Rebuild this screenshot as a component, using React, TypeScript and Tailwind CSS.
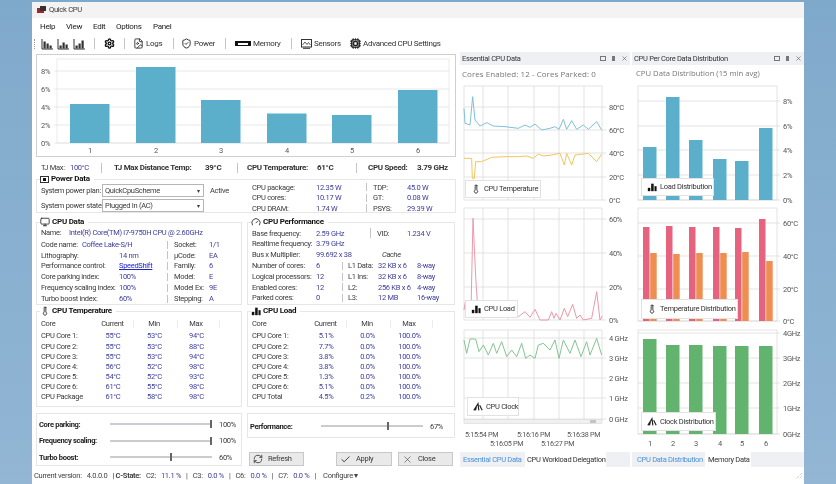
import React from "react";
import { Monitor, Thermometer, Settings, Cpu, RefreshCw, Check, X, Gauge, FileImage, ShieldCheck } from "lucide-react";

const V = "text-[#3d3d9e]";

function Bars({ size = 11 }: { size?: number }) {
  return (
    <svg width={size} height={size} viewBox="0 0 12 12" className="shrink-0">
      <rect x="1" y="7" width="3" height="4" fill="#111" />
      <rect x="5" y="2" width="3" height="9" fill="#111" />
      <rect x="9" y="5" width="2.5" height="6" fill="#111" />
    </svg>
  );
}

function ToolChart({ h }: { h: number[] }) {
  return (
    <svg width="12" height="12" viewBox="0 0 12 12" className="shrink-0">
      <path d="M1 1 V11 H12" stroke="#333" strokeWidth="1" fill="none" />
      {h.map((v, i) => (
        <rect key={i} x={2.5 + i * 3} y={10.5 - v} width="2.2" height={v} fill="#333" />
      ))}
    </svg>
  );
}

function SensorIcon() {
  return (
    <svg width="11" height="10" viewBox="0 0 11 10" className="shrink-0">
      <rect x="0.5" y="0.5" width="10" height="7.5" fill="none" stroke="#333" strokeWidth="1" />
      <path d="M1.5 6 L4 3 L6 5.5 L7.5 3.5 L9.5 6" fill="none" stroke="#333" strokeWidth="0.8" />
      <rect x="2" y="8.8" width="7" height="1" fill="#333" />
    </svg>
  );
}

function Clock2() {
  return (
    <svg width="10" height="10" viewBox="0 0 12 12" className="shrink-0">
      <path d="M1 10 L6 2 L7 10 M8 4 L11 10 M4 6 L3 10" stroke="#222" strokeWidth="1.4" fill="none" />
    </svg>
  );
}

function Div({ w, h = 8 }: { w: number; h?: number }) {
  return (
    <span className="flex shrink-0 justify-center" style={{ width: w }}>
      <span className="w-px bg-[#c4c4c4]" style={{ height: h }} />
    </span>
  );
}

function Group({ title, icon, className = "", children }: { title: string; icon: React.ReactNode; className?: string; children: React.ReactNode }) {
  return (
    <div className={"border border-[#e6e6e6] " + className}>
      <div className="-mt-[7px] ml-[3px] flex h-[12px] w-fit items-center gap-[2px] whitespace-nowrap bg-white pr-1 text-[8px] font-bold tracking-[-0.25px] text-[#111]">
        {icon}
        {title}
      </div>
      {children}
    </div>
  );
}

function Cell({ w, v, children }: { w: number; v?: boolean; children: React.ReactNode }) {
  return (
    <span className={"shrink-0 whitespace-nowrap " + (v ? V : "")} style={{ width: w }}>
      {children}
    </span>
  );
}

function DataRows() {
  const rows: [string, string, string, string][] = [
    ["Lithography:", "14 nm", "µCode:", "EA"],
    ["Performance control:", "SpeedShift", "Family:", "6"],
    ["Core parking index:", "100%", "Model:", "E"],
    ["Frequency scaling index:", "100%", "Model Ex:", "9E"],
    ["Turbo boost index:", "60%", "Stepping:", "A"],
  ];
  return (
    <div className="-mt-[1px] flex flex-col pl-[4px]">
      <div className="flex h-[12px] items-center">
        <Cell w={28}>Name:</Cell>
        <Cell w={170} v>Intel(R) Core(TM) i7-9750H CPU @ 2.60GHz</Cell>
      </div>
      <div className="flex h-[11px] items-center">
        <Cell w={41}>Code name:</Cell>
        <Cell w={78} v>Coffee Lake-S/H</Cell>
        <Div w={14} />
        <Cell w={35}>Socket:</Cell>
        <Cell w={20} v>1/1</Cell>
      </div>
      {rows.map((r) => (
        <div key={r[0]} className="flex h-[10.8px] items-center">
          <Cell w={78}>{r[0]}</Cell>
          <Cell w={41} v>
            {r[1] === "SpeedShift" ? <span className="underline text-[#2222cc]">{r[1]}</span> : r[1]}
          </Cell>
          <Div w={14} />
          <Cell w={35}>{r[2]}</Cell>
          <Cell w={20} v>{r[3]}</Cell>
        </div>
      ))}
    </div>
  );
}

function PerfRows() {
  const rows: string[][] = [
    ["Number of cores:", "6", "L1 Data:", "32 KB x 6", "8-way"],
    ["Logical processors:", "12", "L1 Ins:", "32 KB x 6", "8-way"],
    ["Enabled cores:", "12", "L2:", "256 KB x 6", "4-way"],
    ["Parked cores:", "0", "L3:", "12 MB", "16-way"],
  ];
  return (
    <div className="flex flex-col pl-[4px]">
      <div className="flex h-[10.8px] items-center">
        <Cell w={64}>Base frequency:</Cell>
        <Cell w={47} v>2.59 GHz</Cell>
        <Div w={14} h={10} />
        <Cell w={30}>VID:</Cell>
        <Cell w={40} v>1.234 V</Cell>
      </div>
      <div className="flex h-[10.8px] items-center">
        <Cell w={64}>Realtime frequency:</Cell>
        <Cell w={47} v>3.79 GHz</Cell>
      </div>
      <div className="flex h-[10.8px] items-center">
        <Cell w={64}>Bus x Multiplier:</Cell>
        <Cell w={66} v>99.692 x 38</Cell>
        <span className="italic">Cache</span>
      </div>
      {rows.map((r) => (
        <div key={r[0]} className="flex h-[10.8px] items-center">
          <Cell w={64}>{r[0]}</Cell>
          <Cell w={21} v>{r[1]}</Cell>
          <Div w={11} />
          <Cell w={30}>{r[2]}</Cell>
          <Cell w={39} v>{r[3]}</Cell>
          <Cell w={30} v>{r[4]}</Cell>
        </div>
      ))}
    </div>
  );
}

function CoreTable({ rows, coreW = 51 }: { rows: string[][]; coreW?: number }) {
  return (
    <div className="pl-[4px]">
      <div className="flex h-[14px] items-center">
        <span style={{ width: coreW }}>Core</span>
        <span className="w-[42px] border-r border-[#ececec] text-center">Current</span>
        <span className="w-[44px] border-r border-[#ececec] pr-[3px] text-center">Min</span>
        <span className="w-[42px] border-r border-[#ececec] pr-[5px] text-center">Max</span>
      </div>
      {rows.map((r) => (
        <div key={r[0]} className="flex h-[10.2px] items-center">
          <span className="whitespace-nowrap" style={{ width: coreW }}>{r[0]}</span>
          <span className={"w-[42px] text-center " + V}>{r[1]}</span>
          <span className={"w-[44px] pr-[3px] text-center " + V}>{r[2]}</span>
          <span className={"w-[42px] pr-[5px] text-center " + V}>{r[3]}</span>
        </div>
      ))}
    </div>
  );
}

function Slider({ label, pos, value, trackW = 102, labelW = 71 }: { label: string; pos: number; value: string; trackW?: number; labelW?: number }) {
  return (
    <div className="flex h-[16.5px] items-center pl-[2px]">
      <span className="shrink-0 whitespace-nowrap font-bold text-[#222]" style={{ width: labelW }}>{label}</span>
      <span className="relative h-[2px] shrink-0 bg-[#c9ccd0]" style={{ width: trackW }}>
        <span className="absolute -top-[3px] h-[8px] w-[2px] bg-[#666]" style={{ left: pos }} />
      </span>
      <span className="ml-[7px]">{value}</span>
    </div>
  );
}

function Btn({ icon, label, w }: { icon: React.ReactNode; label: string; w: number }) {
  return (
    <div className="flex h-[14px] items-center gap-[5px] border border-[#c8c8c8] bg-[#e9e9e9] pl-[3px]" style={{ width: w }}>
      {icon}
      <span>{label}</span>
    </div>
  );
}

const z = (a: number[][], ox: number, oy: number) => a.map(([x, y]) => `${ox + x / 3},${oy + y / 3}`).join(" ");

const tempBlue = [[27,175],[30,220],[45,225],[53,140],[60,210],[75,228],[95,218],[115,228],[150,230],[190,235],[210,225],[225,232],[240,222],[260,240],[285,235],[300,230],[312,238],[325,208],[335,238],[350,212],[365,238],[385,225],[400,238],[425,215],[440,240]];
const tempYellow = [[27,325],[50,325],[52,385],[58,385],[62,335],[80,335],[110,322],[150,320],[190,320],[215,318],[235,325],[250,312],[265,318],[290,315],[315,310],[328,345],[335,310],[350,345],[360,315],[385,312],[400,310],[425,335],[440,312]];
const loadLine = [[27,300],[32,270],[40,310],[48,300],[54,25],[62,200],[70,320],[190,320],[210,305],[225,322],[240,298],[255,330],[280,330],[290,305],[297,325],[303,310],[315,330],[328,295],[338,320],[353,283],[365,325],[375,315],[385,330],[410,325],[425,245],[435,330],[442,318]];
const clockLine = [[27,45],[35,85],[45,42],[62,42],[72,80],[85,60],[100,90],[115,55],[125,85],[140,50],[155,95],[170,75],[185,95],[200,55],[212,100],[225,90],[240,100],[250,60],[265,55],[285,75],[300,45],[312,100],[325,45],[345,85],[360,45],[378,95],[395,50],[405,90],[425,40],[440,90]];

const VX = [464, 483, 508, 534, 559, 584, 602];
const G = "#dcdcdc";

function MidChart({ y0, h, top, bottom, ticks, children }: { y0: number; h: number; top: number; bottom: number; ticks: [number, string][]; children: React.ReactNode }) {
  return (
    <svg width="170" height={h} viewBox={`460 ${y0} 170 ${h}`} className="block">
      {VX.map((x) => <line key={x} x1={x} x2={x} y1={top} y2={bottom} stroke={G} strokeWidth="0.8" />)}
      <line x1="464" x2="602" y1={top} y2={top} stroke={G} strokeWidth="0.8" />
      {ticks.map(([y, t]) => (
        <g key={t}>
          <line x1="464" x2="606" y1={y} y2={y} stroke={G} strokeWidth="0.8" />
          <text x="609" y={y + 3} fontSize="7.5" fill="#555">{t}</text>
        </g>
      ))}
      {children}
    </svg>
  );
}

function RightChart({ y0, h, top, bottom, ticks, children }: { y0: number; h: number; top: number; bottom: number; ticks: [number, string][]; children: React.ReactNode }) {
  return (
    <svg width="172" height={h} viewBox={`632 ${y0} 172 ${h}`} className="block">
      <rect x="638" y={top} width="139" height={bottom - top} fill="none" stroke={G} strokeWidth="0.8" />
      {ticks.map(([y, t]) => (
        <g key={t}>
          <line x1="638" x2="780" y1={y} y2={y} stroke={G} strokeWidth="0.8" />
          <text x="783" y={y + 3} fontSize="7.5" fill="#555">{t}</text>
        </g>
      ))}
      {children}
    </svg>
  );
}

function Legend({ pos, icon, label }: { pos: string; icon: React.ReactNode; label: string }) {
  return (
    <div className={"absolute flex items-center gap-[3px] whitespace-nowrap border border-[#e2e2e2] bg-white pl-[5px] text-[#333] " + pos}>
      {icon}
      <span>{label}</span>
    </div>
  );
}

function PaneHeader({ title }: { title: string }) {
  return (
    <div className="flex h-[13px] items-center justify-between bg-[#eff0f3] pl-[2px] pr-[2px] text-[#333]">
      <span className="whitespace-nowrap">{title}</span>
      <span className="flex items-center gap-[6px] text-[#555]">
        <span className="h-[5px] w-[6px] border border-[#777]" />
        <span className="h-[5px] w-[3px] bg-[#777]" />
        <X size={7} strokeWidth={2} />
      </span>
    </div>
  );
}

const RB = [643, 666, 689, 713, 735, 759];
const TopBars = [147, 97, 140, 159, 161, 128];
const RedT = [227, 226, 227, 227, 228, 219];
const OrgT = [253, 254, 253, 253, 252, 261];
const GrnT = [339, 345, 345, 346, 346, 346];

const mainBars: [number, number][] = [[70, 104], [136, 67], [201, 100], [267, 113.5], [332, 115], [398, 90]];

export default function App() {
  const tempRows = [
    ["CPU Core 1:", "55°C", "53°C", "94°C"],
    ["CPU Core 2:", "55°C", "53°C", "88°C"],
    ["CPU Core 3:", "55°C", "53°C", "94°C"],
    ["CPU Core 4:", "56°C", "52°C", "98°C"],
    ["CPU Core 5:", "54°C", "52°C", "93°C"],
    ["CPU Core 6:", "61°C", "55°C", "98°C"],
    ["CPU Package", "61°C", "58°C", "98°C"],
  ];
  const loadRows = [
    ["CPU Core 1:", "5.1%", "0.0%", "100.0%"],
    ["CPU Core 2:", "7.7%", "0.0%", "100.0%"],
    ["CPU Core 3:", "3.8%", "0.0%", "100.0%"],
    ["CPU Core 4:", "3.8%", "0.0%", "100.0%"],
    ["CPU Core 5:", "1.3%", "0.0%", "100.0%"],
    ["CPU Core 6:", "5.1%", "0.0%", "100.0%"],
    ["CPU Total", "4.5%", "0.2%", "100.0%"],
  ];
  return (
    <div className="h-[484px] w-[836px] overflow-hidden bg-gradient-to-b from-[#7fa9cb] to-[#92b6d4] pl-[32px] pr-[32px] pt-[2px]">
      <div className="flex h-[482px] w-[772px] flex-col bg-white text-[7.5px] leading-none tracking-[-0.3px] text-[#3a3a3a] blur-[0.4px] [font-family:'Roboto','Liberation_Sans',sans-serif]">
        {/* Title bar */}
        <div className="flex h-[16px] items-center gap-[3px] bg-[#f3f3f3] pl-[5px] text-[7.6px]">
          <svg width="9" height="8" viewBox="0 0 9 8"><rect x="0" y="2" width="7" height="5" fill="#a8232b" /><rect x="3" y="0" width="6" height="5" fill="#333" /></svg>
          Quick CPU
        </div>
        {/* Menu */}
        <div className="flex h-[17px] items-center pl-[8px] text-[8px] text-[#222]">
          <span className="w-[26px]">Help</span>
          <span className="w-[27px]">View</span>
          <span className="w-[23px]">Edit</span>
          <span className="w-[37px]">Options</span>
          <span>Panel</span>
        </div>
        {/* Toolbar */}
        <div className="flex h-[17px] items-center pl-[2px] text-[8px] text-[#333]">
          <span className="h-[10px] w-[7px] shrink-0 border-l border-dotted border-[#999]" />
          <span className="flex w-[53px] gap-[4px]"><ToolChart h={[7, 5, 3]} /><ToolChart h={[3, 6, 4]} /><ToolChart h={[3, 5, 8]} /></span>
          <Div w={1} h={11} />
          <span className="flex w-[29px] justify-center"><Settings size={11} strokeWidth={3} color="#111" /></span>
          <Div w={1} h={11} />
          <span className="flex w-[48px] items-center gap-[2px] pl-[8px]"><FileImage size={11} color="#333" />Logs</span>
          <Div w={1} h={11} />
          <span className="flex w-[51px] items-center gap-[2px] pl-[7px]"><ShieldCheck size={11} color="#222" />Power</span>
          <Div w={1} h={11} />
          <span className="flex w-[65px] items-center gap-[2px] pl-[9px]"><span className="flex h-[5px] w-[16px] items-center justify-center bg-[#111]"><span className="h-[2px] w-[10px] bg-white" /></span>Memory</span>
          <Div w={1} h={11} />
          <span className="flex w-[58px] items-center gap-[2px] pl-[9px]"><SensorIcon />Sensors</span>
          <span className="flex items-center gap-[2px] whitespace-nowrap"><Cpu size={11} color="#222" strokeWidth={3} />Advanced CPU Settings</span>
        </div>
        {/* Body */}
        <div className="flex h-[416px]">
          {/* Left pane */}
          <div className="ml-[4px] flex w-[420px] shrink-0 flex-col">
            <div className="mt-[2px] h-[103px] border border-[#cfcfcf]">
              <svg width="418" height="101" viewBox="37 55 418 101" className="block">
                <rect x="57" y="59" width="392" height="84" fill="none" stroke="#e6e6e6" strokeWidth="0.8" />
                {[[71, "8%"], [89, "6%"], [107, "4%"], [125, "2%"], [143, "0%"]].map(([y, t]) => (
                  <g key={t as string}>
                    <line x1="54" x2="449" y1={y as number} y2={y as number} stroke="#e2e2e2" strokeWidth="0.8" />
                    <text x="41" y={(y as number) + 3} fontSize="7.5" fill="#555">{t}</text>
                  </g>
                ))}
                {mainBars.map(([x, y], i) => (
                  <g key={x}>
                    <rect x={x} y={y} width="39.5" height={143 - y} fill="#5bafcb" />
                    <text x={x + 20} y="153" fontSize="7.5" fill="#555" textAnchor="middle">{i + 1}</text>
                  </g>
                ))}
              </svg>
            </div>
            {/* Stats */}
            <div className="flex h-[22px] items-center pl-[5px]">
              <Cell w={29}>TJ Max:</Cell>
              <Cell w={31} v>100°C</Cell>
              <Div w={1} h={10} />
              <span className="w-[103px] shrink-0 whitespace-nowrap pl-[12px] text-[8px] font-bold text-[#333]">TJ Max Distance Temp:</span>
              <span className="w-[32px] shrink-0 text-[8px] font-bold text-[#333]">39°C</span>
              <Div w={1} h={10} />
              <span className="w-[79px] shrink-0 whitespace-nowrap pl-[9px] text-[8px] font-bold text-[#333]">CPU Temperature:</span>
              <span className="w-[39px] shrink-0 text-[8px] font-bold text-[#333]">61°C</span>
              <Div w={1} h={10} />
              <span className="w-[60px] shrink-0 whitespace-nowrap pl-[11px] text-[8px] font-bold text-[#333]">CPU Speed:</span>
              <span className="whitespace-nowrap text-[8px] font-bold text-[#333]">3.79 GHz</span>
            </div>
            {/* Power */}
            <Group
              title="Power Data"
              className="h-[34px]"
              icon={<span className="flex h-[7px] w-[9px] items-center justify-center border border-[#333]"><span className="h-[3px] w-[3px] bg-[#111]" /></span>}
            >
              <div className="flex">
                <div className="-mt-[1px] w-[215px] shrink-0 pl-[4px]">
                  {["QuickCpuScheme", "Plugged In (AC)"].map((c, i) => (
                    <div key={c} className={"flex items-center " + (i ? "mt-[2px]" : "")}>
                      <span className="w-[61px] shrink-0 whitespace-nowrap">{i ? "System power state:" : "System power plan:"}</span>
                      <span className="flex h-[13px] w-[102px] shrink-0 items-center justify-between border border-[#b5b5b5] pl-[2px] pr-[3px]">
                        {c}
                        <span className="text-[6px]">▾</span>
                      </span>
                      {i === 0 && <span className="ml-[6px]">Active</span>}
                    </div>
                  ))}
                </div>
                <div className="-mt-[3px] flex flex-col">
                  {[["CPU package:", "12.35 W", "TDP:", "45.0 W"], ["CPU cores:", "10.17 W", "GT:", "0.08 W"], ["CPU DRAM:", "1.74 W", "PSYS:", "29.39 W"]].map((r) => (
                    <div key={r[0]} className="flex h-[10.5px] items-center">
                      <Cell w={64}>{r[0]}</Cell>
                      <Cell w={43} v>{r[1]}</Cell>
                      <Div w={14} />
                      <Cell w={34}>{r[2]}</Cell>
                      <Cell w={32} v>{r[3]}</Cell>
                    </div>
                  ))}
                </div>
              </div>
            </Group>
            {/* Data + Perf */}
            <div className="mt-[9px] flex gap-[5px]">
              <Group title="CPU Data" className="h-[83px] w-[206px] shrink-0" icon={<Monitor size={10} color="#222" />}>
                <DataRows />
              </Group>
              <Group title="CPU Performance" className="h-[83px] w-[208px] shrink-0" icon={<Gauge size={10} color="#222" />}>
                <PerfRows />
              </Group>
            </div>
            {/* Temp + Load */}
            <div className="mt-[6px] flex gap-[5px]">
              <Group title="CPU Temperature" className="h-[96px] w-[206px] shrink-0" icon={<Thermometer size={10} color="#222" />}>
                <CoreTable rows={tempRows} />
              </Group>
              <Group title="CPU Load" className="h-[96px] w-[208px] shrink-0" icon={<Bars size={10} />}>
                <CoreTable rows={loadRows} coreW={53} />
              </Group>
            </div>
            {/* Sliders */}
            <div className="mt-[6px] flex gap-[5px]">
              <div className="h-[53px] w-[206px] shrink-0 border border-[#e6e6e6] pt-[2px]">
                <Slider label="Core parking:" pos={100} value="100%" />
                <Slider label="Frequency scaling:" pos={100} value="100%" />
                <Slider label="Turbo boost:" pos={60} value="60%" />
              </div>
              <div className="w-[208px] shrink-0">
                <div className="h-[25px] border border-[#e6e6e6] pt-[4px]">
                  <Slider label="Performance:" pos={66} value="67%" />
                </div>
                <div className="mt-[14px] flex pl-[2px]">
                  <Btn w={55} label="Refresh" icon={<RefreshCw size={10} color="#333" />} />
                  <span className="ml-[32px]"><Btn w={56} label="Apply" icon={<Check size={11} color="#333" />} /></span>
                  <span className="ml-[6px]"><Btn w={55} label="Close" icon={<X size={11} color="#333" strokeWidth={1.2} />} /></span>
                </div>
              </div>
            </div>
          </div>
          {/* Middle pane */}
          <div className="ml-[4px] flex w-[170px] shrink-0 flex-col">
            <PaneHeader title="Essential CPU Data" />
            <div className="flex h-[17px] items-center whitespace-nowrap pl-[2px] text-[8px] tracking-[0.05px] text-[#777] [font-family:'Open_Sans',sans-serif]">Cores Enabled: 12 - Cores Parked: 0</div>
            <div className="relative">
              <MidChart y0={82} h={123} top={86} bottom={200} ticks={[[107, "80°C"], [130, "60°C"], [153, "40°C"], [177, "20°C"], [200, "0°C"]]}>
                <polyline points={z(tempBlue, 455, 50)} fill="none" stroke="#7fc0d8" strokeWidth="1" />
                <polyline points={z(tempYellow, 455, 50)} fill="none" stroke="#f2c65a" strokeWidth="1" />
              </MidChart>
              <Legend pos="left-[5px] top-[98px] h-[18px] w-[76px]" icon={<Thermometer size={10} color="#222" />} label="CPU Temperature" />
            </div>
            <div className="relative">
              <MidChart y0={205} h={120} top={208} bottom={320} ticks={[[219, "60%"], [253, "40%"], [287, "20%"], [320, "0%"]]}>
                <polyline points={z(loadLine, 455, 210)} fill="none" stroke="#eb99a9" strokeWidth="1" />
              </MidChart>
              <Legend pos="left-[5px] top-[95px] h-[18px] w-[53px]" icon={<Bars size={10} />} label="CPU Load" />
            </div>
            <div className="relative">
              <MidChart y0={325} h={123} top={330} bottom={420} ticks={[[338, "4 GHz"], [358, "3 GHz"], [378, "2 GHz"], [398, "1 GHz"], [419, "0 GHz"]]}>
                <polyline points={z(clockLine, 455, 325)} fill="none" stroke="#84c592" strokeWidth="1" />
                <rect x="464" y="419.5" width="138" height="4" fill="#f0f0f0" stroke="#d4d4d4" strokeWidth="0.5" />
                <rect x="590" y="420" width="6" height="3" fill="#c4c4c4" />
                {[[465, 437, "5:15:54 PM"], [517, 437, "5:16:16 PM"], [567, 437, "5:16:38 PM"], [490, 446, "5:16:05 PM"], [541, 446, "5:16:27 PM"]].map(([x, y, t]) => (
                  <text key={t as string} x={x as number} y={y as number} fontSize="7.2" fill="#555">{t}</text>
                ))}
              </MidChart>
              <Legend pos="left-[7px] top-[72px] h-[19px] w-[52px]" icon={<Clock2 />} label="CPU Clock" />
            </div>
            <div className="mt-[4px] flex h-[15px] items-center bg-[#eff0f3]">
              <span className="w-[65px] shrink-0 whitespace-nowrap pl-[3px] text-[#4a90d9]">Essential CPU Data</span>
              <span className="flex h-full w-[81px] shrink-0 items-center whitespace-nowrap bg-white pl-[2px] text-[#333]">CPU Workload Delegation</span>
            </div>
          </div>
          {/* Right pane */}
          <div className="ml-[2px] flex w-[172px] shrink-0 flex-col">
            <PaneHeader title="CPU Per Core Data Distribution" />
            <div className="flex h-[17px] items-center whitespace-nowrap pl-[4px] text-[7.7px] tracking-[0px] text-[#777] [font-family:'Open_Sans',sans-serif]">CPU Data Distribution (15 min avg)</div>
            <div className="relative">
              <RightChart y0={82} h={123} top={86} bottom={200} ticks={[[101, "8%"], [126, "6%"], [150, "4%"], [175, "2%"], [200, "0%"]]}>
                {RB.map((x, i) => <rect key={x} x={x} y={TopBars[i]} width="13.5" height={200 - TopBars[i]} fill="#5bafcb" />)}
              </RightChart>
              <Legend pos="left-[9px] top-[96px] h-[18px] w-[73px]" icon={<Bars size={10} />} label="Load Distribution" />
            </div>
            <div className="relative">
              <RightChart y0={205} h={120} top={208} bottom={321} ticks={[[223, "60°C"], [256, "40°C"], [289, "20°C"], [321, "0°C"]]}>
                {RB.map((x, i) => (
                  <g key={x}>
                    <rect x={x} y={RedT[i]} width="6.5" height={321 - RedT[i]} fill="#e7627f" />
                    <rect x={x + 7.2} y={OrgT[i]} width="6.5" height={321 - OrgT[i]} fill="#ee8e50" />
                  </g>
                ))}
              </RightChart>
              <Legend pos="left-[9px] top-[94px] h-[20px] w-[97px]" icon={<Thermometer size={10} color="#222" />} label="Temperature Distribution" />
            </div>
            <div className="relative">
              <RightChart y0={325} h={123} top={330} bottom={434} ticks={[[333, "4GHz"], [358, "3GHz"], [383, "2GHz"], [408, "1GHz"], [434, "0GHz"]]}>
                {RB.map((x, i) => (
                  <g key={x}>
                    <rect x={x} y={GrnT[i]} width="13.5" height={434 - GrnT[i]} fill="#61b36e" />
                    <text x={x + 7} y="446" fontSize="7.5" fill="#555" textAnchor="middle">{i + 1}</text>
                  </g>
                ))}
              </RightChart>
              <Legend pos="left-[9px] top-[87px] h-[19px] w-[75px]" icon={<Clock2 />} label="Clock Distribution" />
            </div>
            <div className="mt-[4px] flex h-[15px] items-center bg-[#eff0f3]">
              <span className="w-[73px] shrink-0 whitespace-nowrap pl-[5px] text-[#4a90d9]">CPU Data Distribution</span>
              <span className="flex h-full w-[46px] shrink-0 items-center whitespace-nowrap bg-white pl-[3px] text-[#333]">Memory Data</span>
            </div>
          </div>
        </div>
        {/* Status */}
        <div className="flex h-[16px] items-center gap-[5px] pl-[2px] pr-[1px] text-[#444]">
          <span>Current version:</span>
          <span>4.0.0.0</span>
          <span className="font-bold">| C-State:</span>
          <span>C2:</span>
          <span className={V}>11.1 %</span>
          <span>|</span>
          <span>C3:</span>
          <span className={V}>0.0 %</span>
          <span>|</span>
          <span>C6:</span>
          <span className={V}>0.0 %</span>
          <span>|</span>
          <span>C7:</span>
          <span className={V}>0.0 %</span>
          <span>|</span>
          <span className="ml-[2px]">Configure ▾</span>
          <svg width="8" height="8" viewBox="0 0 8 8" className="ml-auto">
            <path d="M7 1 L1 7 M7 4 L4 7" stroke="#bbb" strokeWidth="1" strokeDasharray="1 1" />
          </svg>
        </div>
      </div>
    </div>
  );
}
